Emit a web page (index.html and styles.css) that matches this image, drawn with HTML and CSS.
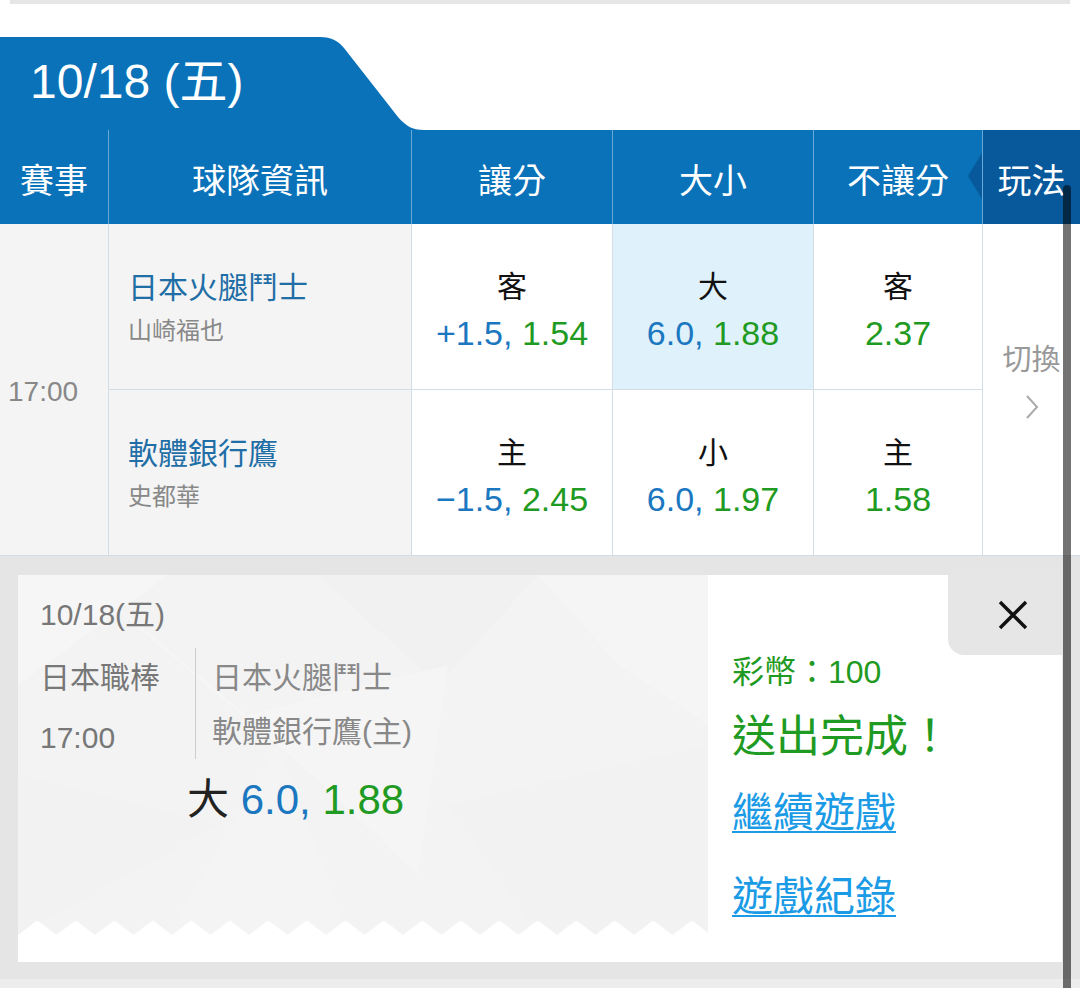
FILE: index.html
```html
<!DOCTYPE html>
<html lang="zh-Hant">
<head>
    <meta charset="UTF-8">
    <meta name="viewport" content="width=device-width, initial-scale=1.0">
    <title>賽事投注</title>
    <link rel="stylesheet" href="styles.css">
</head>
<body>
    <div class="top-bar"></div>

    <div class="tab-row">
        <div class="date-tab">10/18 (五)</div>
        <svg class="tab-slope" width="110" height="93" viewBox="0 0 110 93">
            <path d="M0 0 H6 C18 0 24 4 30 11 L84 80 C92 89 98 93 110 93 H0 Z" fill="#0a72b9"/>
        </svg>
    </div>

    <div class="board">
        <div class="hd">賽事</div>
        <div class="hd">球隊資訊</div>
        <div class="hd">讓分</div>
        <div class="hd">大小</div>
        <div class="hd">不讓分</div>
        <div class="hd hd-play">玩法</div>

        <div class="time-cell">17:00</div>
        <div class="team-cell">
            <div class="team">日本火腿鬥士</div>
            <div class="pitcher">山崎福也</div>
        </div>
        <div class="odd-cell">
            <div class="odd-label">客</div>
            <div class="odd-val"><span class="blue">+1.5,</span> <span class="green">1.54</span></div>
        </div>
        <div class="odd-cell picked">
            <div class="odd-label">大</div>
            <div class="odd-val"><span class="blue">6.0,</span> <span class="green">1.88</span></div>
        </div>
        <div class="odd-cell">
            <div class="odd-label">客</div>
            <div class="odd-val"><span class="green">2.37</span></div>
        </div>
        <div class="switch-cell">
            <div class="switch-text">切換</div>
            <svg width="14" height="26" viewBox="0 0 14 26">
                <polyline points="2,2 12,13 2,24" fill="none" stroke="#aaa" stroke-width="2"/>
            </svg>
        </div>

        <div class="team-cell">
            <div class="team">軟體銀行鷹</div>
            <div class="pitcher">史都華</div>
        </div>
        <div class="odd-cell">
            <div class="odd-label">主</div>
            <div class="odd-val"><span class="blue">&minus;1.5,</span> <span class="green">2.45</span></div>
        </div>
        <div class="odd-cell">
            <div class="odd-label">小</div>
            <div class="odd-val"><span class="blue">6.0,</span> <span class="green">1.97</span></div>
        </div>
        <div class="odd-cell">
            <div class="odd-label">主</div>
            <div class="odd-val"><span class="green">1.58</span></div>
        </div>
    </div>

    <div class="sheet">
        <div class="ticket">
            <div class="slip">
                <svg class="slip-bg" width="690" height="360" viewBox="0 0 690 360">
                    <polygon points="0,0 150,0 0,110" fill="#f6f6f6"/>
                    <polygon points="300,0 520,0 420,110" fill="#f1f1f1"/>
                    <polygon points="520,0 690,0 690,150 600,90" fill="#f5f5f5"/>
                    <polygon points="230,140 430,90 400,300" fill="#f5f5f5"/>
                    <polygon points="0,200 200,250 0,360" fill="#f2f2f2"/>
                    <polygon points="150,360 260,170 330,360" fill="#f4f4f4"/>
                    <polygon points="430,230 690,170 690,360 520,360" fill="#f2f2f2"/>
                    <line x1="60" y1="0" x2="380" y2="270" stroke="#f6f6f6" stroke-width="2"/>
                </svg>
                <div class="slip-body">
                    <div class="slip-date">10/18(五)</div>
                    <div class="slip-meta">
                        <div class="league">
                            <div>日本職棒</div>
                            <div>17:00</div>
                        </div>
                        <div class="match">
                            <div>日本火腿鬥士</div>
                            <div>軟體銀行鷹(主)</div>
                        </div>
                    </div>
                    <div class="slip-pick">大 <span class="blue">6.0,</span> <span class="green">1.88</span></div>
                </div>
                <svg class="zigzag" width="690" height="15" viewBox="0 0 690 15">
                    <defs>
                        <pattern id="teeth" width="38.5" height="15" patternUnits="userSpaceOnUse">
                            <path d="M0 15 L17 2 Q19.25 0 21.5 2 L38.5 15 Z" fill="#fff"/>
                        </pattern>
                    </defs>
                    <rect width="690" height="15" fill="url(#teeth)"/>
                </svg>
            </div>
            <div class="result">
                <button class="close-btn">
                    <svg width="30" height="30" viewBox="0 0 30 30">
                        <path d="M2 2 L28 28 M28 2 L2 28" stroke="#111" stroke-width="3.4"/>
                    </svg>
                </button>
                <div class="coins">彩幣：100</div>
                <div class="done">送出完成！</div>
                <a class="link link-continue" href="#">繼續遊戲</a>
                <a class="link link-record" href="#">遊戲紀錄</a>
            </div>
        </div>
    </div>

    <div class="scrollbar"></div>
</body>
</html>
```

FILE: styles.css
```css
* {
    box-sizing: border-box;
}
body {
    margin: 0;
    width: 1080px;
    position: relative;
    overflow: hidden;
    background: #fff;
    font-family: "Liberation Sans", "Noto Sans CJK TC", sans-serif;
}
.blue { color: #1a77c0; }
.green { color: #1f9a22; }

.top-bar {
    height: 4px;
    margin: 0 10px;
    background: #e6e6e6;
}

.tab-row {
    display: flex;
    height: 93px;
    margin-top: 33px;
}
.date-tab {
    width: 314px;
    display: flex;
    align-items: center;
    padding: 0 0 14px 30px;
    background: #0a72b9;
    color: #fff;
    font-size: 48px;
}
.tab-slope {
    display: block;
}

.board {
    display: grid;
    grid-template-columns: 108px 303px 201px 201px 169px 98px;
    grid-template-rows: 94px 166px 166px;
}
.hd {
    display: flex;
    align-items: center;
    justify-content: center;
    padding-top: 3px;
    background: #0a72b9;
    color: #fff;
    font-size: 34px;
    border-left: 1px solid #6aa8d6;
}
.hd:first-child {
    border-left: 0;
}
.hd-play {
    position: relative;
    background: #08599c;
}
.hd-play::before {
    content: '';
    position: absolute;
    left: -15px;
    top: 23px;
    width: 14px;
    height: 46px;
    background: #08599c;
    clip-path: polygon(100% 0, 0 50%, 100% 100%);
}

.time-cell {
    grid-row: span 2;
    display: flex;
    align-items: center;
    padding: 4px 0 0 8px;
    background: #f4f4f4;
    color: #888;
    font-size: 28px;
    border-bottom: 1px solid #d3dde6;
}
.team-cell {
    display: flex;
    flex-direction: column;
    justify-content: center;
    padding: 7px 0 0 19px;
    background: #f4f4f4;
    border-left: 1px solid #d3dde6;
    border-bottom: 1px solid #d3dde6;
}
.team {
    color: #1f6ea6;
    font-size: 30px;
    line-height: 42px;
}
.pitcher {
    color: #888;
    font-size: 24px;
    line-height: 44px;
}
.odd-cell {
    display: flex;
    flex-direction: column;
    justify-content: center;
    align-items: center;
    padding-top: 9px;
    background: #fff;
    border-left: 1px solid #d3dde6;
    border-bottom: 1px solid #d3dde6;
}
.odd-cell.picked {
    background: #dff1fb;
}
.odd-label {
    color: #111;
    font-size: 30px;
    line-height: 44px;
}
.odd-val {
    font-size: 34px;
    line-height: 48px;
}
.switch-cell {
    grid-row: span 2;
    display: flex;
    flex-direction: column;
    align-items: center;
    justify-content: center;
    gap: 16px;
    padding-bottom: 17px;
    border-left: 1px solid #d3dde6;
    border-bottom: 1px solid #d3dde6;
}
.switch-text {
    color: #999;
    font-size: 29px;
    line-height: 36px;
}

.sheet {
    padding: 19px 18px 17px;
    background: #e5e5e5;
    border-bottom: 9px solid #ededed;
}
.ticket {
    display: flex;
    height: 387px;
    background: #fff;
}
.slip {
    position: relative;
    width: 690px;
    height: 360px;
    display: flex;
    flex-direction: column;
    background: #f3f3f3;
}
.slip-bg {
    position: absolute;
    top: 0;
    left: 0;
}
.slip-body {
    position: relative;
    padding: 20px 0 0 22px;
}
.slip-date {
    color: #777;
    font-size: 30px;
    line-height: 40px;
}
.slip-meta {
    display: flex;
    margin-top: 13px;
}
.league {
    width: 155px;
    color: #777;
    font-size: 30px;
    line-height: 60px;
}
.match {
    align-self: flex-start;
    height: 111px;
    padding: 3px 0 0 16px;
    border-left: 1px solid #ccc;
    color: #888;
    font-size: 30px;
    line-height: 54px;
}
.slip-pick {
    margin-left: 147px;
    color: #222;
    font-size: 42px;
    line-height: 64px;
}
.zigzag {
    display: block;
    position: relative;
    margin-top: auto;
}

.result {
    position: relative;
    flex: 1;
    padding: 75px 0 0 24px;
}
.close-btn {
    position: absolute;
    top: 0;
    right: 0;
    width: 114px;
    height: 80px;
    padding: 0 0 0 16px;
    border: none;
    border-bottom-left-radius: 16px;
    background: #e6e6e6;
    display: flex;
    align-items: center;
    justify-content: center;
}
.coins {
    color: #1f9a22;
    font-size: 32px;
    line-height: 44px;
}
.done {
    margin-top: 11px;
    color: #1f9a22;
    font-size: 44px;
    line-height: 64px;
}
.link {
    display: block;
    width: fit-content;
    color: #1b9be6;
    font-size: 41px;
    line-height: 56px;
    text-decoration: underline;
    text-decoration-thickness: 2px;
    text-underline-offset: 4px;
}
.link-continue {
    margin-top: 16px;
}
.link-record {
    margin-top: 28px;
}

.scrollbar {
    position: absolute;
    left: 1063px;
    top: 185px;
    width: 8px;
    height: 830px;
    border-radius: 4px;
    background: rgba(0, 0, 0, 0.55);
}
```
